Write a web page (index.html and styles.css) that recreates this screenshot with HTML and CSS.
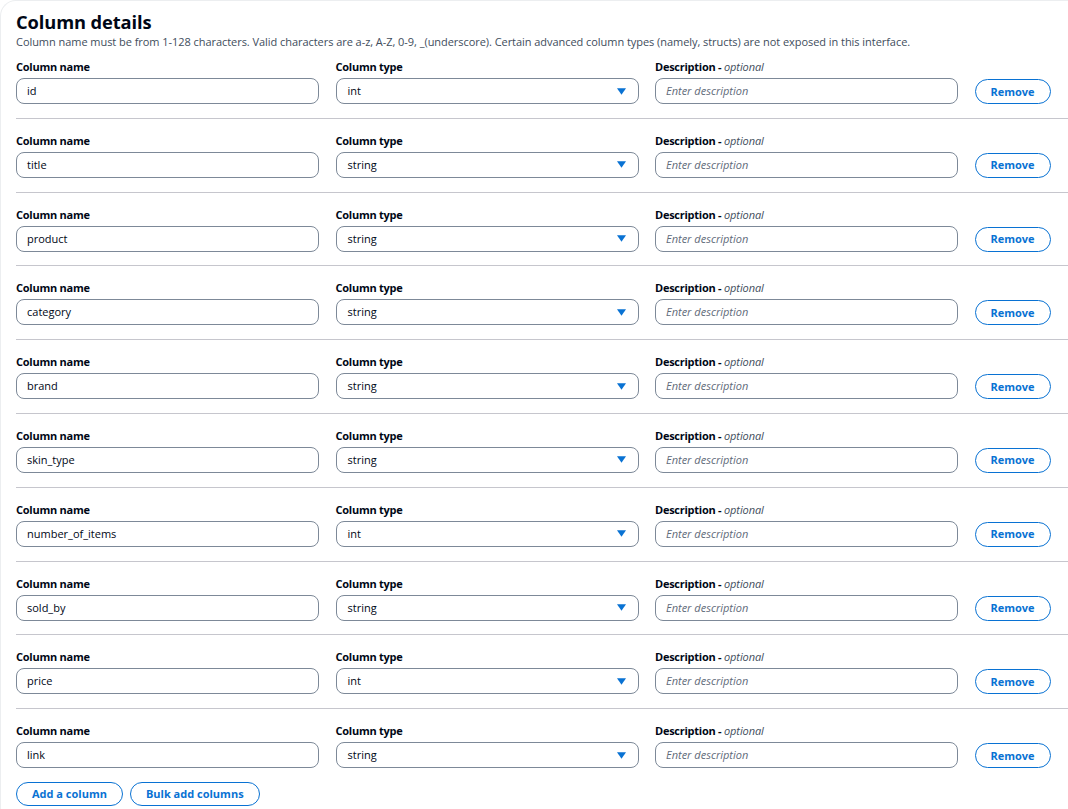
FILE: index.html
```html
<!DOCTYPE html>
<html>
<head>
<meta charset="utf-8">
<link rel="stylesheet" href="styles.css">
</head>
<body>
<div class="card">
  <h2 class="title">Column details</h2>
  <p class="desc">Column name must be from 1-128 characters. Valid characters are a-z, A-Z, 0-9, _(underscore). Certain advanced column types (namely, structs) are not exposed in this interface.</p>
  <div class="rows">
    <div class="row">
      <div class="field"><div class="label">Column name</div><div class="input">id</div></div>
      <div class="field"><div class="label">Column type</div><div class="input select">int<svg class="caret" viewBox="0 0 10 7"><polygon points="0,0 10,0 5,7"/></svg></div></div>
      <div class="field"><div class="label">Description <span class="opt">- <i>optional</i></span></div><div class="input ph">Enter description</div></div>
      <div class="btncell"><button class="btn">Remove</button></div>
    </div>
    <div class="row">
      <div class="field"><div class="label">Column name</div><div class="input">title</div></div>
      <div class="field"><div class="label">Column type</div><div class="input select">string<svg class="caret" viewBox="0 0 10 7"><polygon points="0,0 10,0 5,7"/></svg></div></div>
      <div class="field"><div class="label">Description <span class="opt">- <i>optional</i></span></div><div class="input ph">Enter description</div></div>
      <div class="btncell"><button class="btn">Remove</button></div>
    </div>
    <div class="row">
      <div class="field"><div class="label">Column name</div><div class="input">product</div></div>
      <div class="field"><div class="label">Column type</div><div class="input select">string<svg class="caret" viewBox="0 0 10 7"><polygon points="0,0 10,0 5,7"/></svg></div></div>
      <div class="field"><div class="label">Description <span class="opt">- <i>optional</i></span></div><div class="input ph">Enter description</div></div>
      <div class="btncell"><button class="btn">Remove</button></div>
    </div>
    <div class="row">
      <div class="field"><div class="label">Column name</div><div class="input">category</div></div>
      <div class="field"><div class="label">Column type</div><div class="input select">string<svg class="caret" viewBox="0 0 10 7"><polygon points="0,0 10,0 5,7"/></svg></div></div>
      <div class="field"><div class="label">Description <span class="opt">- <i>optional</i></span></div><div class="input ph">Enter description</div></div>
      <div class="btncell"><button class="btn">Remove</button></div>
    </div>
    <div class="row">
      <div class="field"><div class="label">Column name</div><div class="input">brand</div></div>
      <div class="field"><div class="label">Column type</div><div class="input select">string<svg class="caret" viewBox="0 0 10 7"><polygon points="0,0 10,0 5,7"/></svg></div></div>
      <div class="field"><div class="label">Description <span class="opt">- <i>optional</i></span></div><div class="input ph">Enter description</div></div>
      <div class="btncell"><button class="btn">Remove</button></div>
    </div>
    <div class="row">
      <div class="field"><div class="label">Column name</div><div class="input">skin_type</div></div>
      <div class="field"><div class="label">Column type</div><div class="input select">string<svg class="caret" viewBox="0 0 10 7"><polygon points="0,0 10,0 5,7"/></svg></div></div>
      <div class="field"><div class="label">Description <span class="opt">- <i>optional</i></span></div><div class="input ph">Enter description</div></div>
      <div class="btncell"><button class="btn">Remove</button></div>
    </div>
    <div class="row">
      <div class="field"><div class="label">Column name</div><div class="input">number_of_items</div></div>
      <div class="field"><div class="label">Column type</div><div class="input select">int<svg class="caret" viewBox="0 0 10 7"><polygon points="0,0 10,0 5,7"/></svg></div></div>
      <div class="field"><div class="label">Description <span class="opt">- <i>optional</i></span></div><div class="input ph">Enter description</div></div>
      <div class="btncell"><button class="btn">Remove</button></div>
    </div>
    <div class="row">
      <div class="field"><div class="label">Column name</div><div class="input">sold_by</div></div>
      <div class="field"><div class="label">Column type</div><div class="input select">string<svg class="caret" viewBox="0 0 10 7"><polygon points="0,0 10,0 5,7"/></svg></div></div>
      <div class="field"><div class="label">Description <span class="opt">- <i>optional</i></span></div><div class="input ph">Enter description</div></div>
      <div class="btncell"><button class="btn">Remove</button></div>
    </div>
    <div class="row">
      <div class="field"><div class="label">Column name</div><div class="input">price</div></div>
      <div class="field"><div class="label">Column type</div><div class="input select">int<svg class="caret" viewBox="0 0 10 7"><polygon points="0,0 10,0 5,7"/></svg></div></div>
      <div class="field"><div class="label">Description <span class="opt">- <i>optional</i></span></div><div class="input ph">Enter description</div></div>
      <div class="btncell"><button class="btn">Remove</button></div>
    </div>
    <div class="row">
      <div class="field"><div class="label">Column name</div><div class="input">link</div></div>
      <div class="field"><div class="label">Column type</div><div class="input select">string<svg class="caret" viewBox="0 0 10 7"><polygon points="0,0 10,0 5,7"/></svg></div></div>
      <div class="field"><div class="label">Description <span class="opt">- <i>optional</i></span></div><div class="input ph">Enter description</div></div>
      <div class="btncell"><button class="btn">Remove</button></div>
    </div>
  </div>
  <div class="actions">
    <button class="btn">Add a column</button>
    <button class="btn">Bulk add columns</button>
  </div>
</div>
</body>
</html>
```
FILE: styles.css
```css
* { box-sizing: border-box; }
html, body { margin: 0; padding: 0; background: #ffffff; }
body {
  font-family: "Open Sans", "Noto Sans", sans-serif;
  color: #000716;
  font-size: 12px;
}
.card {
  width: 1068px;
  min-height: 809px;
  padding: 10px 0 0 15px;
  border-top: 1px solid #eceef0;
  border-left: 1px solid #eceef0;
  border-top-left-radius: 16px;
  margin: 0;
}
.title {
  margin: 0;
  font-size: 18.3px;
  line-height: 22px;
  font-weight: 700;
  letter-spacing: -0.1px;
}
.desc {
  margin: 1px 0 0;
  font-size: 11px;
  line-height: 16px;
  color: #414d5c;
  letter-spacing: -0.05px;
}
.rows { margin-top: 9px; }
.row {
  display: grid;
  grid-template-columns: 303px 303px 303px 76px;
  column-gap: 16.5px;
  align-items: end;
  padding: 14px 0 13.8px;
  border-bottom: 1px solid #c6c6cd;
}
.row:first-child { padding-top: 0; }
.row:last-child { border-bottom: none; padding-bottom: 14px; }
.label {
  font-size: 11px;
  font-weight: 700;
  line-height: 16px;
  margin-bottom: 3px;
  letter-spacing: -0.25px;
}
.opt { font-weight: 700; }
.opt i { font-weight: 400; color: #414d5c; letter-spacing: -0.1px; }
.input {
  height: 26px;
  border: 1px solid #7d8998;
  border-radius: 8px;
  padding: 0 10px;
  font-size: 11px;
  line-height: 24px;
  display: flex;
  align-items: center;
  justify-content: space-between;
}
.select { padding-left: 11px; padding-right: 12px; }
.ph { font-style: italic; color: #5f6b7a; }
.caret { width: 9px; height: 7px; fill: #0972d3; }
.btncell { display: flex; }
.btn {
  font-family: inherit;
  height: 25px;
  border: 1.5px solid #0972d3;
  border-radius: 20px;
  background: #fff;
  color: #0972d3;
  font-weight: 700;
  font-size: 11px;
  padding: 0 15px;
  line-height: 20px;
  white-space: nowrap;
}
.btncell .btn { width: 76px; padding: 0; margin-bottom: 0; }
.actions { display: flex; gap: 7px; }
.actions .btn { height: 24px; padding: 0 15px; }
```
